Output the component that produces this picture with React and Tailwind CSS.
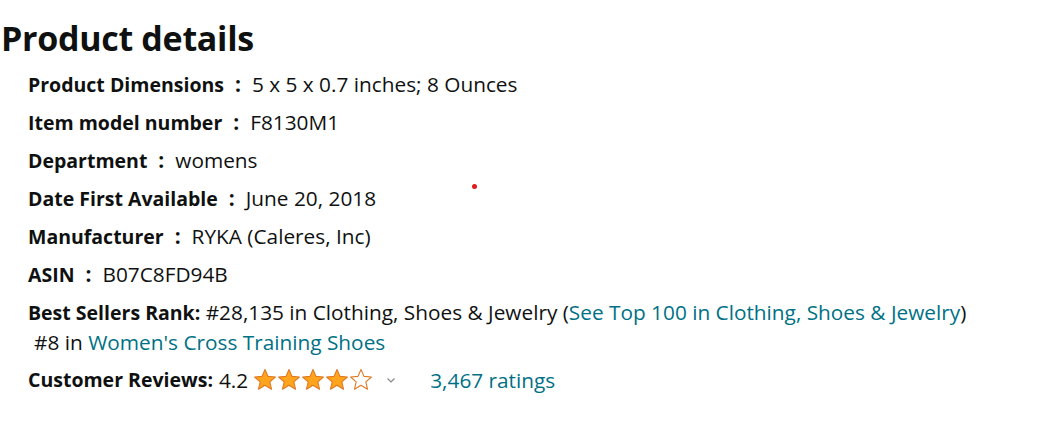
const rows = [
    { label: 'Product Dimensions', value: '5 x 5 x 0.7 inches; 8 Ounces' },
    { label: 'Item model number', value: 'F8130M1' },
    { label: 'Department', value: 'womens' },
    { label: 'Date First Available', value: 'June 20, 2018' },
    { label: 'Manufacturer', value: 'RYKA (Caleres, Inc)' },
    { label: 'ASIN', value: 'B07C8FD94B' },
];

const Star = ({ fill }) => (
    <svg width="24" height="24" viewBox="0 0 24 24">
        <path
            d="M12 1.5l3 6.9 7.4.6-5.6 4.9 1.7 7.3L12 17.3l-6.5 3.9 1.7-7.3L1.6 9l7.4-.6z"
            fill={fill ? '#FFA41C' : '#fff'}
            stroke="#DE7921"
            strokeWidth="1.1"
            strokeLinejoin="round"
        />
    </svg>
);

const App = () => {
    return (
        <div className="relative h-[429px] w-[1050px] bg-white text-[#0f1111] font-['Open_Sans',sans-serif]">
            <h2 className="pl-[1px] pt-[16px] text-[34px] font-bold leading-[44px] tracking-[-0.3px]">Product details</h2>

            <ul className="ml-[28px] mt-[11px] text-[20.8px] leading-[26px]">
                {rows.map((r) => (
                    <li key={r.label} className="mb-[12px] h-[26px]">
                        <span className="font-bold text-[19.5px]">{r.label}</span>
                        <span className="mx-[11px] font-bold">:</span>
                        <span>{r.value}</span>
                    </li>
                ))}

                <li className="mb-[12px]">
                    <div className="h-[26px]">
                        <span className="font-bold text-[19.5px]">Best Sellers Rank:</span> #28,135 in Clothing, Shoes &amp; Jewelry (
                        <a className="text-[#007185]">See Top 100 in Clothing, Shoes &amp; Jewelry</a>)
                    </div>
                    <div className="mt-[4px] h-[26px] pl-[6px]">
                        #8 in <a className="text-[#007185]">Women&apos;s Cross Training Shoes</a>
                    </div>
                </li>

                <li className="flex h-[26px] items-center">
                    <span className="font-bold text-[19.5px]">Customer Reviews:</span>
                    <span className="ml-[6px]">4.2</span>
                    <span className="ml-[5px] flex items-center">
                        <Star fill />
                        <Star fill />
                        <Star fill />
                        <Star fill />
                        <Star />
                    </span>
                    <svg width="12" height="12" viewBox="0 0 12 12" className="ml-[12px]">
                        <path d="M2.5 4.5L6 8l3.5-3.5" fill="none" stroke="#888" strokeWidth="1.2" />
                    </svg>
                    <a className="ml-[33px] text-[#007185]">3,467 ratings</a>
                </li>
            </ul>

            <div className="absolute left-[472px] top-[184px] h-[5px] w-[5px] rounded-full bg-[#e31b1b]" />
        </div>
    );
};

export default App;
